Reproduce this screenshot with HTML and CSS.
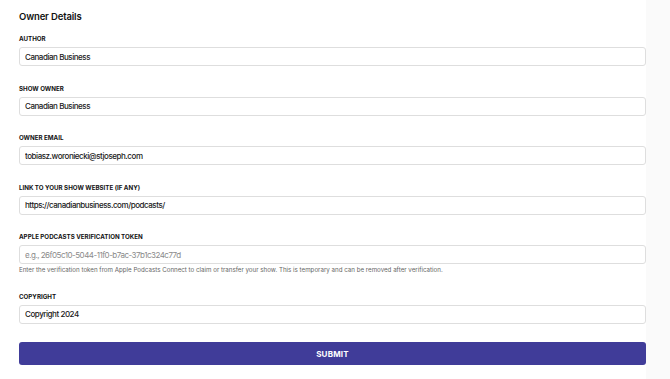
FILE: index.html
```html
<!DOCTYPE html>
<html>
<head>
<meta charset="utf-8">
<link rel="stylesheet" href="styles.css">
</head>
<body>
<div class="page">
  <main class="main">
    <h2 class="title">Owner Details</h2>
    <form class="form">
      <div class="field">
        <label class="label">AUTHOR</label>
        <input class="input" type="text" value="Canadian Business">
      </div>
      <div class="field">
        <label class="label">SHOW OWNER</label>
        <input class="input" type="text" value="Canadian Business">
      </div>
      <div class="field">
        <label class="label">OWNER EMAIL</label>
        <input class="input" type="text" value="tobiasz.woroniecki@stjoseph.com">
      </div>
      <div class="field">
        <label class="label">LINK TO YOUR SHOW WEBSITE (IF ANY)</label>
        <input class="input" type="text" value="https://canadianbusiness.com/podcasts/">
      </div>
      <div class="field">
        <label class="label">APPLE PODCASTS VERIFICATION TOKEN</label>
        <input class="input" type="text" placeholder="e.g., 26f05c10-5044-11f0-b7ac-37b1c324c77d">
        <p class="help">Enter the verification token from Apple Podcasts Connect to claim or transfer your show. This is temporary and can be removed after verification.</p>
      </div>
      <div class="field">
        <label class="label">COPYRIGHT</label>
        <input class="input" type="text" value="Copyright 2024">
      </div>
      <button class="submit" type="button">SUBMIT</button>
    </form>
  </main>
  <aside class="side"></aside>
</div>
</body>
</html>
```
FILE: styles.css
```css
* { box-sizing: border-box; }
html, body { margin: 0; padding: 0; }
body {
  font-family: Inter, "Noto Sans", sans-serif;
  color: #1a1a1a;
  background: #fafafa;
}
.page {
  display: flex;
  min-height: 379px;
}
.main {
  width: 646px;
  background: #ffffff;
  padding: 11px 0 0 19px;
}
.side { flex: 1; }
.title {
  margin: 0 0 12px 0;
  font-size: 9.5px;
  font-weight: 600;
  line-height: 12px;
  letter-spacing: -0.15px;
  color: #111;
}
.form {
  display: flex;
  flex-direction: column;
}
.field {
  display: flex;
  flex-direction: column;
  margin-bottom: 18.5px;
}
.label {
  font-size: 6.2px;
  font-weight: 700;
  line-height: 8px;
  margin-bottom: 4px;
  color: #111;
}
.input {
  width: 627px;
  height: 19px;
  border: 1px solid #dedede;
  border-radius: 3px;
  background: #fff;
  padding: 0 5px;
  font-family: Inter, "Noto Sans", sans-serif;
  font-size: 8px;
  font-weight: 500;
  letter-spacing: -0.45px;
  color: #1a1a1a;
  outline: none;
}
.input::placeholder { color: #8a8a8a; font-weight: 400; letter-spacing: -0.5px; }
.help {
  margin: 2px 0 0 0;
  font-size: 6.2px;
  line-height: 8px;
  color: #666;
}
.submit {
  width: 627px;
  height: 23px;
  border: none;
  border-radius: 3px;
  background: #403c99;
  color: #fff;
  font-family: Inter, "Noto Sans", sans-serif;
  font-size: 8px;
  font-weight: 700;
  letter-spacing: 0.2px;
}
```
